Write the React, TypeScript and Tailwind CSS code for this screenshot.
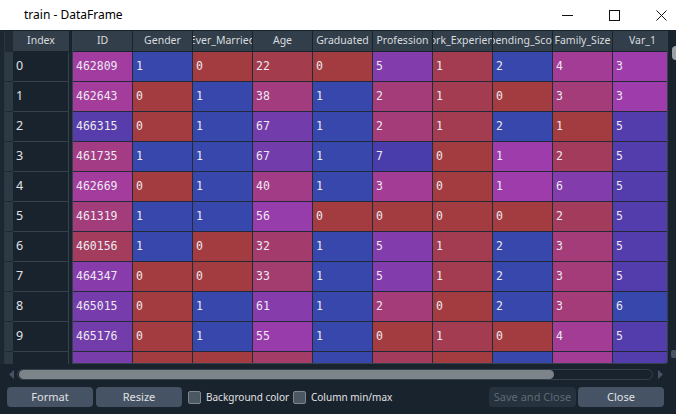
import React from 'react';

type Col = { name: string; min: number; max: number };

const columns: Col[] = [
  { name: 'ID', min: 458982, max: 467974 },
  { name: 'Gender', min: 0, max: 1 },
  { name: 'Ever_Married', min: 0, max: 1 },
  { name: 'Age', min: 18, max: 89 },
  { name: 'Graduated', min: 0, max: 1 },
  { name: 'Profession', min: 0, max: 8 },
  { name: 'Work_Experience', min: 0, max: 14 },
  { name: 'Spending_Score', min: 0, max: 2 },
  { name: 'Family_Size', min: 1, max: 9 },
  { name: 'Var_1', min: 0, max: 6 },
];

const rows: number[][] = [
  [462809, 1, 0, 22, 0, 5, 1, 2, 4, 3],
  [462643, 0, 1, 38, 1, 2, 1, 0, 3, 3],
  [466315, 0, 1, 67, 1, 2, 1, 2, 1, 5],
  [461735, 1, 1, 67, 1, 7, 0, 1, 2, 5],
  [462669, 0, 1, 40, 1, 3, 0, 1, 6, 5],
  [461319, 1, 1, 56, 0, 0, 0, 0, 2, 5],
  [460156, 1, 0, 32, 1, 5, 1, 2, 3, 5],
  [464347, 0, 0, 33, 1, 5, 1, 2, 3, 5],
  [465015, 0, 1, 61, 1, 2, 0, 2, 3, 6],
  [465176, 0, 1, 55, 1, 0, 1, 0, 4, 5],
];

// next row is only a sliver at the bottom edge, its text is out of view
const partialRow = [464942, 0, 0, 30, 1, 1, 0, 2, 4, 5];

// same scheme as spyder's dataframe editor: hue from blue (max) to red (min),
// drawn at 60% alpha over the table background
function cellColor(v: number, min: number, max: number) {
  let h = 0.65 + (0.35 * (max - v)) / (max - min);
  if (h >= 1) h -= 1;
  const s = 0.7;
  const val = 1;
  const i = Math.floor(h * 6);
  const f = h * 6 - i;
  const p = val * (1 - s);
  const q = val * (1 - f * s);
  const t = val * (1 - (1 - f) * s);
  const [r, g, b] = [
    [val, t, p],
    [q, val, p],
    [p, val, t],
    [p, q, val],
    [t, p, val],
    [val, p, q],
  ][i % 6];
  const bg = [25, 35, 45];
  const mix = (c: number, k: number) => Math.round(0.6 * c * 255 + 0.4 * bg[k]);
  return `rgb(${mix(r, 0)}, ${mix(g, 1)}, ${mix(b, 2)})`;
}

function TitleBar() {
  return (
    <div className="flex h-[30px] shrink-0 items-center bg-white text-black">
      <span className="pl-[24px] text-[12px]">train - DataFrame</span>
      <div className="ml-auto flex h-full">
        <div className="flex w-[46px] items-center justify-center">
          <svg width="11" height="11" viewBox="0 0 11 11">
            <line x1="0" y1="5.5" x2="11" y2="5.5" stroke="#111" strokeWidth="1" />
          </svg>
        </div>
        <div className="flex w-[48px] items-center justify-center">
          <svg width="11" height="11" viewBox="0 0 11 11">
            <rect x="0.5" y="0.5" width="10" height="10" fill="none" stroke="#111" strokeWidth="1" />
          </svg>
        </div>
        <div className="flex w-[38px] items-center justify-end pr-[9px]">
          <svg width="11" height="11" viewBox="0 0 11 11">
            <path d="M0.5 0.5 L10.5 10.5 M10.5 0.5 L0.5 10.5" stroke="#111" strokeWidth="1" />
          </svg>
        </div>
      </div>
    </div>
  );
}

function IndexTable() {
  return (
    <div className="flex h-full w-[65px] shrink-0 flex-col overflow-hidden border-l border-[#2a3540]">
      <div className="flex h-[21px] shrink-0">
        <div className="w-[8px] shrink-0 bg-[#1f2a34]" />
        <div className="flex w-[56px] items-center justify-center border-b border-[#19232d] bg-[#323f4b] text-[10.5px] text-[#d9dbdd]">
          Index
        </div>
      </div>
      {[...rows, partialRow].map((_, i) => (
        <div key={i} className="flex h-[30px] shrink-0">
          <div className="w-[8px] shrink-0 border-b border-[#1f2a34] bg-[#2d3a45]" />
          <div className="flex w-[56px] items-center border-r border-b border-[#32414b] pl-[3px] text-[12.5px] text-[#e0e1e3]">
            {i < rows.length ? i : ''}
          </div>
        </div>
      ))}
    </div>
  );
}

function DataTable() {
  return (
    <div className="h-full w-[596px] shrink-0 overflow-hidden rounded-br-[3px] border-l border-r border-b border-[#32414b]">
      <div className="flex h-[21px]">
        {columns.map((c) => (
          <div
            key={c.name}
            className="flex w-[60px] shrink-0 items-center justify-center overflow-hidden whitespace-nowrap border-r border-b border-[#19232d] bg-[#323f4b] text-[10.5px] text-[#d9dbdd]"
          >
            <span className="shrink-0">{c.name}</span>
          </div>
        ))}
      </div>
      {rows.map((r, i) => (
        <div key={i} className="flex h-[30px]">
          {r.map((v, j) => (
            <div
              key={j}
              className="flex w-[60px] shrink-0 items-center border-r border-b border-[#222a38] pl-[3px] font-['DejaVu_Sans_Mono',monospace] text-[11.5px] text-[#ece8f2]"
              style={{ backgroundColor: cellColor(v, columns[j].min, columns[j].max) }}
            >
              {v}
            </div>
          ))}
        </div>
      ))}
      <div className="flex h-[30px]">
        {partialRow.map((v, j) => (
          <div
            key={j}
            className="w-[60px] shrink-0 border-r border-[#222a38]"
            style={{ backgroundColor: cellColor(v, columns[j].min, columns[j].max) }}
          />
        ))}
      </div>
    </div>
  );
}

function Checkbox({ label, className }: { label: string; className?: string }) {
  return (
    <label className={`flex items-center gap-[5px] text-[10px] text-[#e0e1e3] ${className ?? ''}`}>
      <span className="h-[13px] w-[13px] shrink-0 rounded-[2px] border border-[#7d868e] bg-[#4b5763]" />
      <span className="whitespace-nowrap">{label}</span>
    </label>
  );
}

export default function App() {
  return (
    <div className="flex h-[414px] w-[676px] flex-col overflow-hidden bg-[#19232d] font-['Noto_Sans',sans-serif]">
      <TitleBar />
      <div className="flex h-[334px] shrink-0 pt-[1px]">
        <div className="w-[4px] shrink-0 bg-[#1c2731]" />
        <IndexTable />
        <div className="w-[3px] shrink-0" />
        <DataTable />
        <div className="relative flex-1 overflow-hidden">
          <div className="absolute left-[4px] top-[15px] h-[14px] w-[10px] rounded-[4px] bg-[#9aa1a6]" />
          <div className="absolute left-[3px] bottom-[6px] h-[8px] w-[8px] rounded-[2px] bg-[#455364]" />
        </div>
      </div>
      <div className="flex h-[20px] shrink-0 items-center pl-[9px]">
        <svg width="5" height="9" viewBox="0 0 5 9">
          <path d="M5 0 L0 4.5 L5 9 Z" fill="#455364" />
        </svg>
        <div className="ml-[3px] flex h-[11px] w-[636px] items-center rounded-full border border-[#32414b] px-[1px]">
          <div className="h-[9px] w-[535px] rounded-full bg-[#7d8489]" />
        </div>
        <svg className="ml-[5px]" width="5" height="9" viewBox="0 0 5 9">
          <path d="M0 0 L5 4.5 L0 9 Z" fill="#455364" />
        </svg>
      </div>
      <div className="flex items-center pl-[7px] pr-[12px] pt-[3px]">
        <button className="h-[20px] w-[86px] rounded-[4px] bg-[#455364] text-[11px] text-[#e0e1e3]">Format</button>
        <button className="ml-[3px] h-[20px] w-[86px] rounded-[4px] bg-[#455364] text-[11px] text-[#e0e1e3]">Resize</button>
        <Checkbox label="Background color" className="ml-[6px] w-[105px]" />
        <Checkbox label="Column min/max" />
        <button className="ml-auto h-[20px] w-[87px] rounded-[4px] bg-[#26323d] text-[11px] text-[#5e6a75]">
          Save and Close
        </button>
        <button className="ml-[2px] h-[20px] w-[86px] rounded-[4px] bg-[#455364] text-[11px] text-[#e0e1e3]">Close</button>
      </div>
    </div>
  );
}
